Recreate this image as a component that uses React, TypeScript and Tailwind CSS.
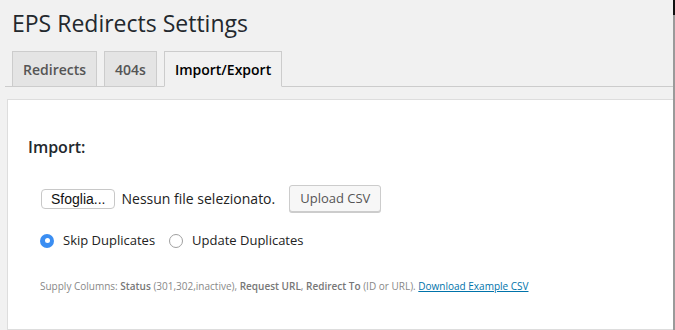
import React from 'react'

function Tab({ label, active }: { label: string; active?: boolean }) {
  return (
    <div
      className={
        active
          ? 'h-[36px] -mb-px px-[10px] flex items-center border border-[#ccc] border-b-[#f1f1f1] bg-[#f1f1f1] text-[14px] font-semibold text-[#000]'
          : 'h-[35px] px-[10px] flex items-center border border-b-0 border-[#ccc] bg-[#e4e4e4] text-[14px] font-semibold text-[#555]'
      }
    >
      {label}
    </div>
  )
}

function Radio({ checked, label }: { checked?: boolean; label: string }) {
  return (
    <label className="flex items-center gap-[9px]">
      {checked ? (
        <span className="w-[14px] h-[14px] rounded-full bg-[#3b8ef2] flex items-center justify-center">
          <span className="w-[5px] h-[5px] rounded-full bg-white" />
        </span>
      ) : (
        <span className="w-[14px] h-[14px] rounded-full bg-white border border-[#a0a0a0]" />
      )}
      <span className="text-[13px] text-[#222]">{label}</span>
    </label>
  )
}

export default function App() {
  return (
    <div className="relative w-[675px] h-[330px] overflow-hidden bg-[#f1f1f1] font-['Open_Sans',sans-serif]">
      {/* Title */}
      <h1 className="pl-[12px] pt-[8px] text-[23px] leading-[30px] text-[#23282d]">EPS Redirects Settings</h1>

      {/* Tabs */}
      <div className="ml-[5px] mt-[13px] pl-[7px] flex gap-[7px] border-b border-[#ccc] items-end">
        <Tab label="Redirects" />
        <Tab label="404s" />
        <Tab label="Import/Export" active />
      </div>

      {/* Panel */}
      <div className="ml-[7px] mt-[12px] h-[231px] bg-white border border-r-0 border-[#ddd] pl-[20px]">
        <h3 className="mt-[36px] text-[16px] leading-[22px] font-semibold text-[#23282d]">Import:</h3>

        <div className="ml-[13px] mt-[27px] flex items-center">
          <button className="h-[20px] px-[9px] bg-white border border-[#c8c8c8] rounded-[4px] text-[14px] leading-[18px] text-[#111] font-['Liberation_Sans',sans-serif]">
            Sfoglia...
          </button>
          <span className="ml-[6px] text-[14px] text-[#222]">Nessun file selezionato.</span>
          <button className="ml-[14px] h-[27px] px-[10px] bg-[#f7f7f7] border border-[#ccc] rounded-[3px] shadow-[0_1px_0_#ccc] text-[13px] text-[#555]">
            Upload CSV
          </button>
        </div>

        <div className="ml-[12px] mt-[19px] flex items-center gap-[14px]">
          <Radio checked label="Skip Duplicates" />
          <Radio label="Update Duplicates" />
        </div>

        <p className="ml-[12px] mt-[28px] text-[10px] leading-[14px] text-[#888]">
          Supply Columns: <span className="font-semibold text-[#777]">Status</span> (301,302,inactive),{' '}
          <span className="font-semibold text-[#777]">Request URL</span>,{' '}
          <span className="font-semibold text-[#777]">Redirect To</span> (ID or URL).{' '}
          <a href="#" className="text-[#0073aa] underline">Download Example CSV</a>
        </p>
      </div>

      {/* window edge */}
      <div className="absolute top-0 right-0 w-[2px] h-full bg-[#9a9a9a]">
        <div className="h-[15px] bg-[#111]" />
      </div>
    </div>
  )
}
